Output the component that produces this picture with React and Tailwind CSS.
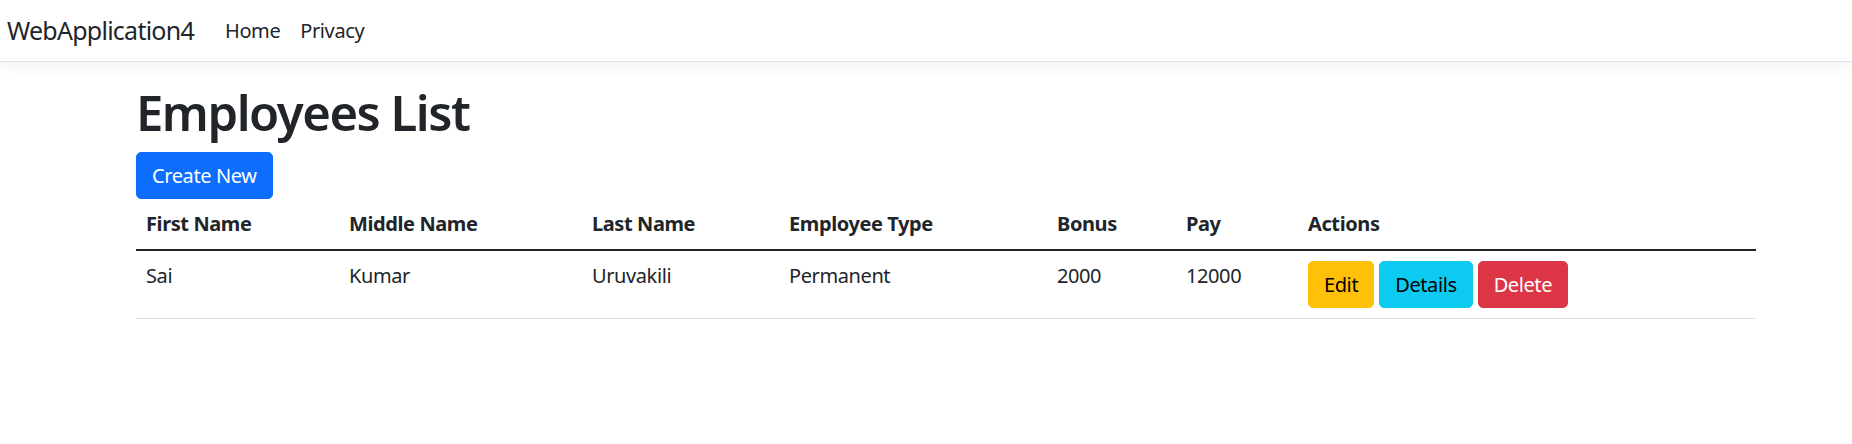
import React from "react";

const employees = [
  {
    id: 1,
    firstName: "Sai",
    middleName: "Kumar",
    lastName: "Uruvakili",
    type: "Permanent",
    bonus: 2000,
    pay: 12000,
  },
];

const columns = [
  { label: "First Name", w: "w-[203px]" },
  { label: "Middle Name", w: "w-[243px]" },
  { label: "Last Name", w: "w-[197px]" },
  { label: "Employee Type", w: "w-[268px]" },
  { label: "Bonus", w: "w-[129px]" },
  { label: "Pay", w: "w-[122px]" },
  { label: "Actions", w: "w-[458px]" },
];

function Navbar() {
  return (
    <nav className="h-[62px] flex items-center bg-white border-b border-[#dee2e6] shadow-[0_5px_15px_rgba(0,0,0,0.05)] pl-[7px]">
      <a href="#" className="text-[25px] leading-[37px] tracking-[-0.03em] text-[#212529] mr-[21px]">
        WebApplication4
      </a>
      <ul className="flex">
        <li>
          <a href="#" className="block px-[10px] text-[20px] leading-[30px] text-[#212529]">
            Home
          </a>
        </li>
        <li>
          <a href="#" className="block px-[10px] text-[20px] leading-[30px] text-[#212529]">
            Privacy
          </a>
        </li>
      </ul>
    </nav>
  );
}

function ActionButton({ children, className }) {
  return (
    <a
      href="#"
      className={`inline-block px-[15px] py-[7.5px] border text-[20px] leading-[30px] rounded-[5px] ${className}`}
    >
      {children}
    </a>
  );
}

export default function App() {
  return (
    <div className="min-h-[444px] bg-white text-[#212529] tracking-[-0.025em] font-['Segoe_UI','Noto_Sans',sans-serif]">
      <Navbar />
      <main className="pl-[136px] pr-[96px] pt-[20px]">
        <h1 className="text-[49px] leading-[60px] font-semibold tracking-[-0.03em] mb-[10px]">Employees List</h1>
        <p>
          <ActionButton className="bg-[#0d6efd] border-[#0d6efd] text-white">Create New</ActionButton>
        </p>
        <table className="table-fixed w-[1620px] border-collapse text-[20px] leading-[30px]">
          <thead>
            <tr>
              {columns.map((c) => (
                <th key={c.label} className={`${c.w} text-left font-bold p-[10px] border-b-2 border-[#212529]`}>
                  {c.label}
                </th>
              ))}
            </tr>
          </thead>
          <tbody>
            {employees.map((e) => (
              <tr key={e.id}>
                <td className="p-[10px] align-top border-b border-[#dee2e6]">{e.firstName}</td>
                <td className="p-[10px] align-top border-b border-[#dee2e6]">{e.middleName}</td>
                <td className="p-[10px] align-top border-b border-[#dee2e6]">{e.lastName}</td>
                <td className="p-[10px] align-top border-b border-[#dee2e6]">{e.type}</td>
                <td className="p-[10px] align-top border-b border-[#dee2e6]">{e.bonus}</td>
                <td className="p-[10px] align-top border-b border-[#dee2e6]">{e.pay}</td>
                <td className="p-[10px] align-top border-b border-[#dee2e6]">
                  <div className="flex gap-[5px]">
                    <ActionButton className="bg-[#ffc107] border-[#ffc107] text-black">Edit</ActionButton>
                    <ActionButton className="bg-[#0dcaf0] border-[#0dcaf0] text-black">Details</ActionButton>
                    <ActionButton className="bg-[#dc3545] border-[#dc3545] text-white">Delete</ActionButton>
                  </div>
                </td>
              </tr>
            ))}
          </tbody>
        </table>
      </main>
    </div>
  );
}
